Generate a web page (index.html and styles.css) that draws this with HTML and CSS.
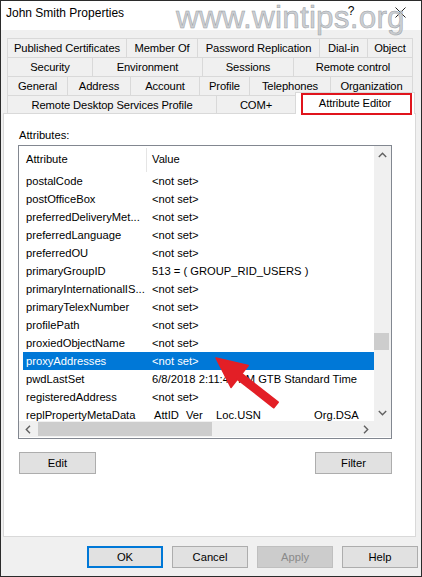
FILE: index.html
```html
<!DOCTYPE html>
<html lang="en">
<head>
    <meta charset="UTF-8">
    <title>John Smith Properties</title>
    <link rel="stylesheet" href="styles.css">
</head>
<body>
    <div class="window">
        <div class="titlebar">
            <span class="title">John Smith Properties</span>
            <div class="caption">
                <span class="caption-btn help">?</span>
                <span class="caption-btn close">
                    <svg width="11" height="11" viewBox="0 0 11 11"><path d="M0.5 0.5 L10.5 10.5 M10.5 0.5 L0.5 10.5" stroke="#222" stroke-width="1"/></svg>
                </span>
            </div>
            <div class="watermark">www.wintips.org</div>
        </div>

        <div class="tabs">
            <div class="tab-row row1">
                <div class="tab">Published Certificates</div>
                <div class="tab">Member Of</div>
                <div class="tab">Password Replication</div>
                <div class="tab">Dial-in</div>
                <div class="tab">Object</div>
            </div>
            <div class="tab-row row2">
                <div class="tab">Security</div>
                <div class="tab">Environment</div>
                <div class="tab">Sessions</div>
                <div class="tab">Remote control</div>
            </div>
            <div class="tab-row row3">
                <div class="tab">General</div>
                <div class="tab">Address</div>
                <div class="tab">Account</div>
                <div class="tab">Profile</div>
                <div class="tab">Telephones</div>
                <div class="tab">Organization</div>
            </div>
            <div class="tab-row row4">
                <div class="tab">Remote Desktop Services Profile</div>
                <div class="tab">COM+</div>
                <div class="tab active">Attribute Editor</div>
            </div>
        </div>

        <div class="panel">
            <div class="label">Attributes:</div>
            <div class="listbox">
                <div class="list-view">
                    <div class="list-head"><span>Attribute</span><span>Value</span></div>
                    <div class="list-row"><span>postalCode</span><span>&lt;not set&gt;</span></div>
                    <div class="list-row"><span>postOfficeBox</span><span>&lt;not set&gt;</span></div>
                    <div class="list-row"><span>preferredDeliveryMet...</span><span>&lt;not set&gt;</span></div>
                    <div class="list-row"><span>preferredLanguage</span><span>&lt;not set&gt;</span></div>
                    <div class="list-row"><span>preferredOU</span><span>&lt;not set&gt;</span></div>
                    <div class="list-row"><span>primaryGroupID</span><span>513 = ( GROUP_RID_USERS )</span></div>
                    <div class="list-row"><span>primaryInternationalIS...</span><span>&lt;not set&gt;</span></div>
                    <div class="list-row"><span>primaryTelexNumber</span><span>&lt;not set&gt;</span></div>
                    <div class="list-row"><span>profilePath</span><span>&lt;not set&gt;</span></div>
                    <div class="list-row"><span>proxiedObjectName</span><span>&lt;not set&gt;</span></div>
                    <div class="list-row selected"><span>proxyAddresses</span><span>&lt;not set&gt;</span></div>
                    <div class="list-row"><span>pwdLastSet</span><span>6/8/2018 2:11:41 PM GTB Standard Time</span></div>
                    <div class="list-row"><span>registeredAddress</span><span>&lt;not set&gt;</span></div>
                    <div class="list-row"><span>replPropertyMetaData</span><span class="meta-cols"><i>AttID</i><i>Ver</i><i>Loc.USN</i><i>Org.DSA</i></span></div>
                </div>
                <div class="vscroll">
                    <div class="arrow">
                        <svg width="9" height="6" viewBox="0 0 9 6"><polyline points="0.8,5 4.5,1.3 8.2,5" fill="none" stroke="#606060" stroke-width="1.4"/></svg>
                    </div>
                    <div class="track"><div class="thumb"></div></div>
                    <div class="arrow">
                        <svg width="9" height="6" viewBox="0 0 9 6"><polyline points="0.8,1 4.5,4.7 8.2,1" fill="none" stroke="#606060" stroke-width="1.4"/></svg>
                    </div>
                </div>
                <div class="hscroll">
                    <div class="arrow">
                        <svg width="6" height="9" viewBox="0 0 6 9"><polyline points="5,0.8 1.3,4.5 5,8.2" fill="none" stroke="#606060" stroke-width="1.4"/></svg>
                    </div>
                    <div class="track"><div class="thumb"></div></div>
                    <div class="arrow">
                        <svg width="6" height="9" viewBox="0 0 6 9"><polyline points="1,0.8 4.7,4.5 1,8.2" fill="none" stroke="#606060" stroke-width="1.4"/></svg>
                    </div>
                </div>
                <div class="corner"></div>
            </div>
            <div class="panel-actions">
                <button class="btn">Edit</button>
                <button class="btn">Filter</button>
            </div>
        </div>

        <div class="footer">
            <button class="btn wide default">OK</button>
            <button class="btn wide">Cancel</button>
            <button class="btn wide disabled">Apply</button>
            <button class="btn wide">Help</button>
        </div>

        <!-- red pointer drawn over the list -->
        <svg class="pointer" viewBox="0 0 422 577" width="422" height="577">
            <polygon points="216,358 248.2,365.5 241.8,373.7 278.2,402.2 273.8,407.8 237.4,379.3 231,387.5"
                     fill="#e31f26" stroke="#e31f26" stroke-width="1.5" stroke-linejoin="round"/>
        </svg>
    </div>
</body>
</html>
```

FILE: styles.css
```css
* {
    box-sizing: border-box;
}

body, html {
    margin: 0;
    padding: 0;
    background: #fff;
    font-family: 'Liberation Sans', Arial, sans-serif;
    font-size: 11.2px;
    color: #000;
}

.window {
    position: relative;
    width: 422px;
    height: 577px;
    border: 1px solid #2b2b2b;
    background: #f0f0f0;
    display: flex;
    flex-direction: column;
    overflow: hidden;
}

/* title bar */
.titlebar {
    position: relative;
    height: 29px;
    flex: none;
    background: #fff;
    display: flex;
    align-items: flex-start;
    padding-left: 5px;
}

.title {
    font-size: 12px;
    line-height: 14px;
    margin-top: 5px;
}

.caption {
    margin-left: auto;
    display: flex;
}

.caption-btn {
    height: 29px;
    display: flex;
    align-items: center;
    justify-content: center;
}

.caption-btn.help {
    width: 46px;
    font-size: 12px;
    padding-bottom: 11px;
    margin-top: 1px;
}

.caption-btn.close {
    width: 47px;
    padding-left: 5px;
    padding-bottom: 6px;
}

.watermark {
    position: absolute;
    left: 175px;
    top: 0;
    font-family: 'Liberation Sans', Arial, sans-serif;
    font-size: 31.5px;
    line-height: 32px;
    color: rgba(190, 194, 199, 0.8);
    -webkit-text-stroke: 0.5px #9a9fa5;
    letter-spacing: 0.2px;
    pointer-events: none;
}

/* tab strip */
.tabs {
    flex: none;
    margin: 8px 0 0 6px;
    width: 406px;
}

.tab-row {
    display: grid;
    height: 19px;
}

.row1 { grid-template-columns: 119px 71px 122px 48px 46px; }
.row2 { grid-template-columns: 85px 110px 91px 120px; }
.row3 { grid-template-columns: 60px 63px 69px 50px 81px 83px; }
.row4 {
    grid-template-columns: 209px 79px 118px;
    height: 18px;
}

.tab {
    border-top: 1px solid #d9d9d9;
    border-left: 1px solid #d9d9d9;
    background: #f0f0f0;
    display: flex;
    align-items: center;
    justify-content: center;
    white-space: nowrap;
    letter-spacing: -0.1px;
}

.tab:last-child {
    border-right: 1px solid #d9d9d9;
}

.tab.active {
    position: relative;
    z-index: 2;
    align-self: start;
    height: 22px;
    margin-top: -3px;
    margin-right: -2px;
    background: #fff;
    border-color: #d9d9d9;
    padding-bottom: 2px;
}

/* red outline round the open tab */
.tab.active::after {
    content: '';
    position: absolute;
    left: 5px;
    right: 2px;
    top: 0;
    bottom: -1px;
    border: 2px solid #e0141c;
}

/* page body */
.panel {
    flex: none;
    height: 424px;
    margin: 0 5px 0 2px;
    background: #fff;
    border: 1px solid #d9d9d9;
    padding: 14px 0 0 14px;
}

.label {
    line-height: 14px;
    margin: 0 0 3px 1px;
}

.listbox {
    width: 374px;
    height: 294px;
    border: 1px solid #828790;
    display: grid;
    grid-template-columns: 355px 17px;
    grid-template-rows: 275px 16px;
    background: #fff;
}

.list-view {
    overflow: hidden;
}

.list-head,
.list-row {
    display: grid;
    grid-template-columns: 129px 1fr;
    margin-left: 4px;
    white-space: nowrap;
}

.list-head {
    position: relative;
    height: 26px;
    line-height: 26px;
}

.list-head::after {
    content: '';
    position: absolute;
    left: 123px;
    top: 2px;
    bottom: 0;
    width: 1px;
    background: #e5e5e5;
}

.list-head span:first-child,
.list-row span:first-child {
    padding-left: 3px;
}

.list-row {
    height: 18px;
    line-height: 18px;
}

.list-row.selected {
    background: #0078d7;
    color: #fff;
}

.meta-cols {
    display: flex;
}

.meta-cols i {
    font-style: normal;
}

.meta-cols i:nth-child(1) { width: 34px; padding-left: 2px; }
.meta-cols i:nth-child(2) { width: 30px; }
.meta-cols i:nth-child(3) { width: 98px; }

/* scroll bars */
.vscroll,
.hscroll,
.corner {
    background: #f0f0f0;
}

.vscroll {
    display: flex;
    flex-direction: column;
}

.hscroll {
    display: flex;
}

.arrow {
    flex: none;
    width: 17px;
    height: 17px;
    display: flex;
    align-items: center;
    justify-content: center;
}

.hscroll .arrow {
    height: 16px;
}

.track {
    flex: 1;
}

.vscroll .thumb {
    margin: 170px 2px 0 0;
    height: 17px;
    background: #cdcdcd;
}

.hscroll .thumb {
    margin: 1px 0 0 2px;
    width: 174px;
    height: 14px;
    background: #cdcdcd;
}

/* buttons */
.btn {
    width: 77px;
    height: 22px;
    padding: 0;
    border: 1px solid #adadad;
    background: #e1e1e1;
    font-family: inherit;
    font-size: 11.2px;
    color: #000;
}

.panel-actions {
    display: flex;
    justify-content: space-between;
    width: 373px;
    margin: 13px 0 0 1px;
}

.footer {
    display: flex;
    justify-content: flex-end;
    gap: 9px;
    margin-top: 9px;
    padding-right: 3px;
}

.btn.wide {
    width: 76px;
}

.btn.default {
    border-color: #0078d7;
    box-shadow: inset 0 0 0 1px #0078d7;
}

.btn.disabled {
    background: #cccccc;
    border-color: #bfbfbf;
    color: #8a8a8a;
}

.pointer {
    position: absolute;
    left: -1px;
    top: -1px;
    pointer-events: none;
    z-index: 5;
}
```
